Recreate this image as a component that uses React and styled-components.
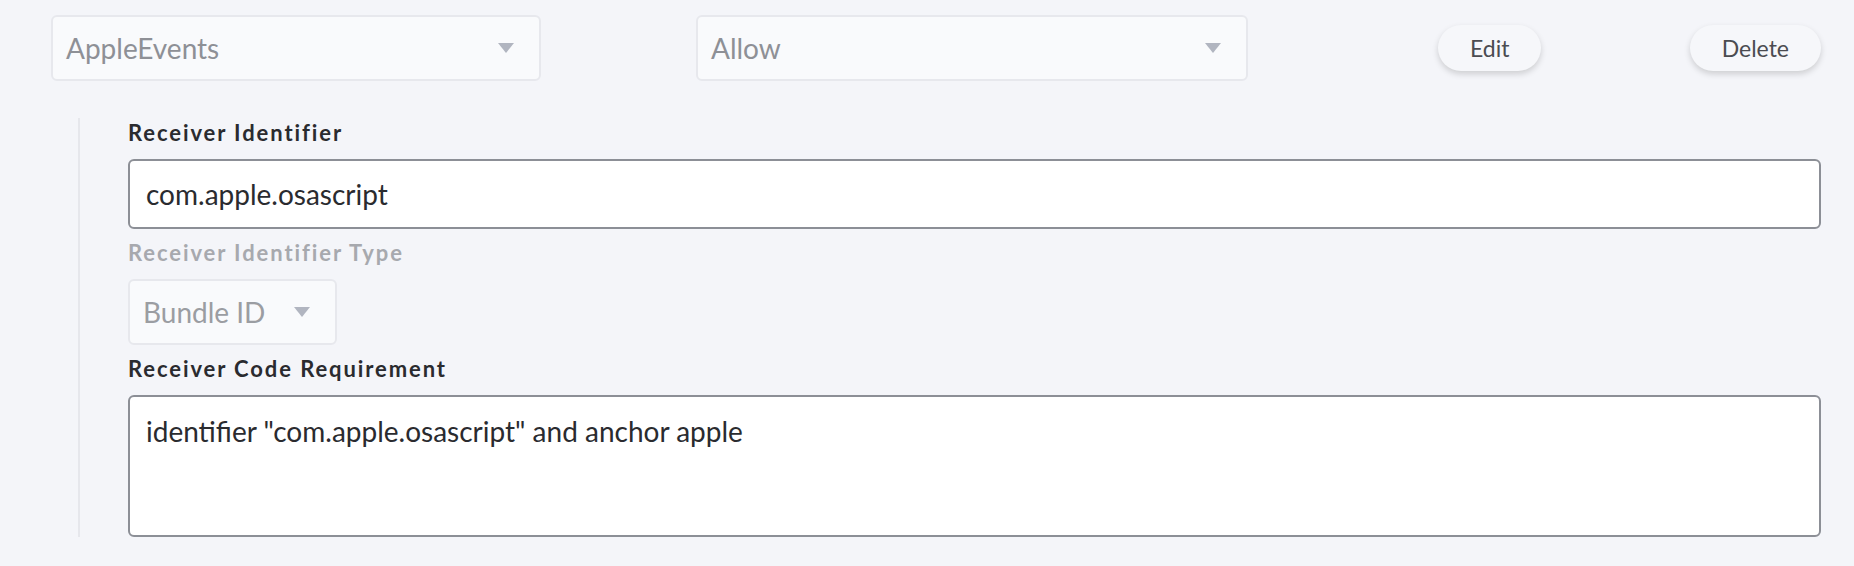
import React from 'react'
import styled, { createGlobalStyle } from 'styled-components'

const GlobalStyle = createGlobalStyle`
    body {
        margin: 0;
        background: #f4f5f9;
        font-family: Lato, "Liberation Sans", sans-serif;
    }
`;

const Caret = () => (
    <svg width="16" height="10" viewBox="0 0 16 10">
        <path d="M0 0 H16 L8 10 Z" fill="#b1b5c0" />
    </svg>
)

const SelectBox = ({ value, width, muted }) => (
    <Select $width={width}>
        <SelectValue $muted={muted}>{value}</SelectValue>
        <Caret />
    </Select>
)

const App = () => {
    return (
        <>
            <GlobalStyle />
            <Page>
                <TopRow>
                    <SelectBox value='AppleEvents' width={490} />
                    <Spacer $w={155} />
                    <SelectBox value='Allow' width={552} />
                    <Spacer $w={190} />
                    <PillButton>Edit</PillButton>
                    <PillButton $push>Delete</PillButton>
                </TopRow>

                <Nested>
                    <Field>
                        <Label>Receiver Identifier</Label>
                        <TextInput>com.apple.osascript</TextInput>
                    </Field>
                    <Field>
                        <Label $disabled>Receiver Identifier Type</Label>
                        <SelectBox value='Bundle ID' width={209} muted />
                    </Field>
                    <Field>
                        <Label>Receiver Code Requirement</Label>
                        <TextArea>identifier "com.apple.osascript" and anchor apple</TextArea>
                    </Field>
                </Nested>
            </Page>
        </>
    )
}

export default App


const Page = styled.div`
    padding: 15px 33px 0 51px;
    height: 566px;
    box-sizing: border-box;
`;

const TopRow = styled.div`
    display: flex;
    align-items: center;
    height: 66px;
`;

const Spacer = styled.div`
    width: ${p => p.$w}px;
    flex-shrink: 0;
`;

const Select = styled.div`
    box-sizing: border-box;
    width: ${p => p.$width}px;
    height: 66px;
    flex-shrink: 0;
    display: flex;
    align-items: center;
    justify-content: space-between;
    padding: 0 25px 0 13px;
    background: #f9fafc;
    border: 2px solid #e7e8ed;
    border-radius: 6px;
`;

const SelectValue = styled.span`
    font-size: 28px;
    color: ${p => p.$muted ? '#9b9da2' : '#8e9096'};
`;

const PillButton = styled.button`
    height: 46px;
    padding: 0 32px;
    margin-left: ${p => p.$push ? 'auto' : '0'};
    border: none;
    border-radius: 23px;
    background: #f6f7fa;
    box-shadow: 0 3px 6px rgba(0, 0, 0, 0.16);
    font-family: Lato, "Liberation Sans", sans-serif;
    font-size: 23px;
    color: #4b4c51;
    cursor: pointer;
`;

const Nested = styled.div`
    margin: 37px 0 0 27px;
    padding: 3px 0 0 48px;
    border-left: 2px solid #e6e7ec;
    display: flex;
    flex-direction: column;
    gap: 12px;
`;

const Field = styled.div`
    display: flex;
    flex-direction: column;
    align-items: flex-start;
    gap: 14px;
`;

const Label = styled.div`
    font-size: 22px;
    line-height: 24px;
    font-weight: 700;
    letter-spacing: 1.9px;
    color: ${p => p.$disabled ? '#a7a9ae' : '#2a2b2f'};
`;

const TextInput = styled.div`
    box-sizing: border-box;
    width: 100%;
    height: 70px;
    display: flex;
    align-items: center;
    padding: 0 16px;
    background: #fff;
    border: 2px solid #8c8f96;
    border-radius: 6px;
    font-size: 28px;
    color: #2a2b2f;
`;

const TextArea = styled.div`
    box-sizing: border-box;
    width: 100%;
    height: 142px;
    padding: 16px 16px;
    background: #fff;
    border: 2px solid #8c8f96;
    border-radius: 6px;
    font-size: 28px;
    line-height: 36px;
    color: #2a2b2f;
`;
